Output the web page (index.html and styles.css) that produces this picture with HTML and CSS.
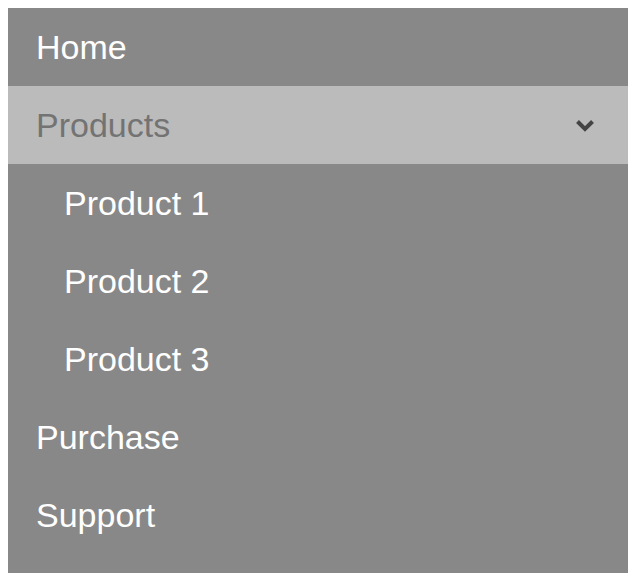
FILE: index.html
```html
<!DOCTYPE html>
<html>
<head>
<meta charset="utf-8">
<link rel="stylesheet" href="styles.css">
</head>
<body>
<nav class="menu">
  <a class="item" href="#">Home</a>
  <a class="item active" href="#">Products
    <svg class="chev" width="20" height="13" viewBox="0 0 20 13"><path d="M2.5 2.5 L10 10 L17.5 2.5" fill="none" stroke="#444" stroke-width="4" stroke-linecap="butt" stroke-linejoin="miter"/></svg>
  </a>
  <a class="item sub" href="#">Product 1</a>
  <a class="item sub" href="#">Product 2</a>
  <a class="item sub" href="#">Product 3</a>
  <a class="item" href="#">Purchase</a>
  <a class="item" href="#">Support</a>
</nav>
</body>
</html>
```
FILE: styles.css
```css
body {
  margin: 8px;
  background: #fff;
  font-family: "Liberation Sans", Arial, sans-serif;
}
.menu {
  width: 620px;
  background: #888888;
  display: flex;
  flex-direction: column;
  padding-bottom: 19px;
}
.item {
  display: flex;
  align-items: center;
  justify-content: space-between;
  height: 78px;
  box-sizing: border-box;
  padding: 0 33px 0 28px;
  color: #fff;
  text-decoration: none;
  font-size: 34px;
}
.item.active {
  background: #bbbbbb;
  color: #737373;
}
.item.sub {
  padding-left: 56px;
}
.chev {
  display: block;
}
```
